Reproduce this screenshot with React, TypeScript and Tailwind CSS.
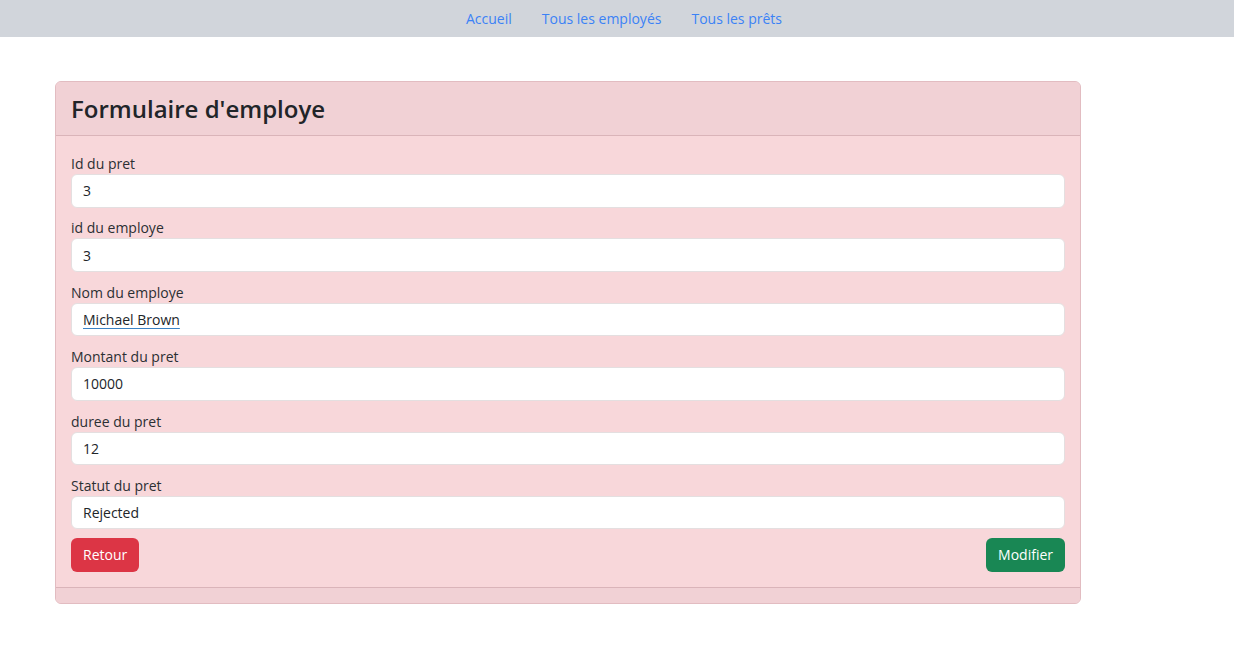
import React from "react";

const fields = [
  { label: "Id du pret", value: "3" },
  { label: "id du employe", value: "3" },
  { label: "Nom du employe", value: "Michael Brown", link: true },
  { label: "Montant du pret", value: "10000" },
  { label: "duree du pret", value: "12" },
  { label: "Statut du pret", value: "Rejected" },
];

function Field({ label, value, link }: { label: string; value: string; link?: boolean }) {
  return (
    <div className="flex flex-col">
      <label className="h-[21px] text-[14px] leading-[21px] text-[#2b2f33]">{label}</label>
      <div className="flex h-[33.5px] items-center rounded-[6px] border border-[#e4dfe0] bg-white px-[11px] text-[14px] text-[#212529]">
        {link ? <span className="underline decoration-[#3b82c4] underline-offset-[3px]">{value}</span> : value}
      </div>
    </div>
  );
}

export default function App() {
  return (
    <div className="min-h-[646px] bg-white font-['Open_Sans',sans-serif]">
      <nav className="flex h-[37px] items-center justify-center gap-[30px] bg-[#d1d5db] pl-[14px] text-[14px] text-[#3b82f6]">
        <a>Accueil</a>
        <a>Tous les employés</a>
        <a>Tous les prêts</a>
      </nav>
      <div className="pl-[55px] pt-[44px]">
        <div className="w-[1026px] overflow-hidden rounded-[6px] border border-[#e2bcc1] bg-[#f8d7da]">
          <div className="flex h-[54px] items-center border-b border-[#dab4b9] bg-[#f1d1d5] px-[15px]">
            <h1 className="text-[24px] font-semibold text-[#212529]">Formulaire d'employe</h1>
          </div>
          <div className="flex flex-col px-[15px] pb-[15px] pt-[17px]">
            <div className="flex flex-col gap-[9.9px]">
              {fields.map((f) => (
                <Field key={f.label} {...f} />
              ))}
            </div>
            <div className="mt-[8.5px] flex justify-between">
              <button className="h-[34px] rounded-[6px] bg-[#dc3545] px-[12px] text-[14px] text-white">Retour</button>
              <button className="h-[34px] rounded-[6px] bg-[#198754] px-[12px] text-[14px] text-white">Modifier</button>
            </div>
          </div>
          <div className="h-[16px] border-t border-[#dab4b9] bg-[#f1d1d5]"></div>
        </div>
      </div>
    </div>
  );
}
